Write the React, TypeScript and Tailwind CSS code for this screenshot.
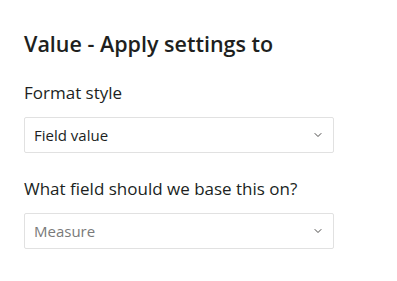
import { ChevronDown } from 'lucide-react';

const font = { fontFamily: '"Open Sans", "Noto Sans", sans-serif' };

const Select = ({ value, placeholder }: { value: string; placeholder?: boolean }) => (
  <div className="flex h-9 w-[310px] items-center justify-between rounded-[2px] border border-[#e1e1e1] bg-white pl-[9px] pr-[9px]">
    <span className={`text-[15px] ${placeholder ? 'text-[#7a7a7a]' : 'text-[#201f1e]'}`}>{value}</span>
    <ChevronDown className="h-[12px] w-[12px] text-[#323130]" strokeWidth={1.75} />
  </div>
);

export default function App() {
  return (
    <div className="h-[281px] w-[397px] bg-white pl-6 pt-[29px] text-[#201f1e]" style={font}>
      <h2 className="text-[21.5px] font-semibold leading-[29px]">Value - Apply settings to</h2>
      <p className="mt-[23px] text-[17px] leading-[23px]">Format style</p>
      <div className="mt-[13px]">
        <Select value="Field value" />
      </div>
      <p className="mt-[24px] text-[17px] leading-[23px]">What field should we base this on?</p>
      <div className="mt-[13px]">
        <Select value="Measure" placeholder />
      </div>
    </div>
  );
}
